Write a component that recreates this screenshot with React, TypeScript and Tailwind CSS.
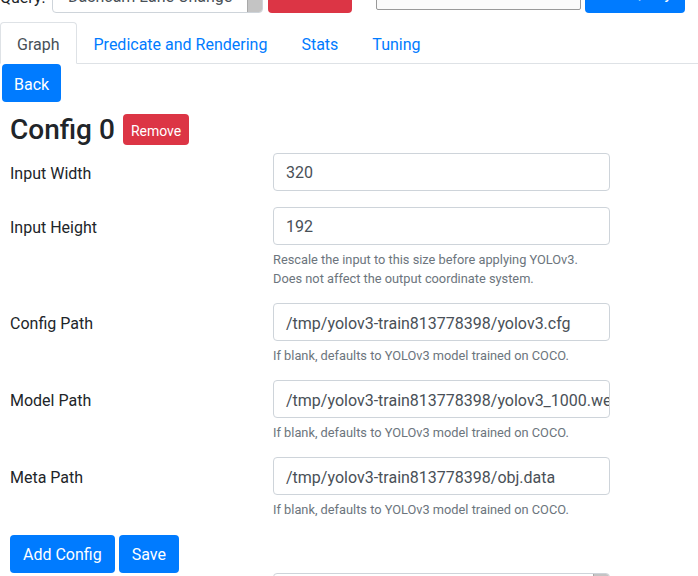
import React from 'react';

type Field = {
  label: string;
  value: string;
  help?: string[];
};

const fields: Field[] = [
  { label: 'Input Width', value: '320' },
  {
    label: 'Input Height',
    value: '192',
    help: [
      'Rescale the input to this size before applying YOLOv3.',
      'Does not affect the output coordinate system.',
    ],
  },
  {
    label: 'Config Path',
    value: '/tmp/yolov3-train813778398/yolov3.cfg',
    help: ['If blank, defaults to YOLOv3 model trained on COCO.'],
  },
  {
    label: 'Model Path',
    value: '/tmp/yolov3-train813778398/yolov3_1000.weights',
    help: ['If blank, defaults to YOLOv3 model trained on COCO.'],
  },
  {
    label: 'Meta Path',
    value: '/tmp/yolov3-train813778398/obj.data',
    help: ['If blank, defaults to YOLOv3 model trained on COCO.'],
  },
];

const tabs = ['Graph', 'Predicate and Rendering', 'Stats', 'Tuning'];

export default function App() {
  return (
    <div className="h-[576px] overflow-hidden bg-white font-['Roboto',sans-serif] text-[16px] leading-[24px] text-[#212529]">
      <div className="-mt-[25px]">
        {/* Query bar */}
        <div className="flex h-[38px] items-end">
          <span className="mb-[3px] w-[52px]">Query:</span>
          <div className="flex h-[38px] w-[211px] items-end overflow-hidden rounded-[4px] border border-[#ced4da] bg-white">
            <span className="mb-[3px] flex-1 pl-[15px] text-[#495057]">Dashcam Lane Change</span>
            <div className="h-full w-[15px] border-l border-[#a9a9a9] bg-[#c4c4c4]" />
          </div>
          <button className="ml-[5px] h-[38px] w-[84px] rounded-[4px] bg-[#dc3545] text-white">Remove</button>
          <input
            placeholder="Name"
            readOnly
            className="mb-[3px] ml-[24px] h-[32px] w-[205px] rounded-[2px] border border-[#999] bg-[#fafafa] px-[6px] text-[#495057] placeholder:text-[#757575]"
          />
          <button className="ml-[4px] h-[38px] w-[100px] rounded-[4px] bg-[#007bff] text-white">Add Query</button>
        </div>

        {/* Tabs */}
        <ul className="mt-[9px] flex border-b border-[#dee2e6]">
          {tabs.map((t, i) => (
            <li key={t} className="-mb-px">
              <a
                className={
                  i === 0
                    ? 'block rounded-t-[4px] border border-[#dee2e6] border-b-white bg-white px-4 pt-[10px] pb-[6px] text-[#495057]'
                    : 'block border border-transparent px-4 pt-[10px] pb-[6px] text-[#007bff]'
                }
              >
                {t}
              </a>
            </li>
          ))}
        </ul>

        <button className="ml-[2px] h-[38px] rounded-[4px] bg-[#007bff] px-3 pt-[3px] text-white">Back</button>

        <div className="pl-[10px]">
          <div className="mt-[11px] mb-[6px] flex items-center">
            <h3 className="text-[28px] font-medium leading-[33.6px]">Config 0</h3>
            <button className="ml-[8px] h-[31px] rounded-[4px] bg-[#dc3545] px-2 pt-[2px] text-[14px] text-white">Remove</button>
          </div>

          {fields.map((f) => (
            <div key={f.label} className="mb-4 flex">
              <div className="flex h-[38px] w-[263px] items-center pt-[4px]">{f.label}</div>
              <div className="w-[337px]">
                <div className="flex h-[38px] items-center overflow-hidden whitespace-nowrap rounded-[4px] border border-[#ced4da] px-3 pt-[3px] text-[#495057]">
                  {f.value}
                </div>
                {f.help && (
                  <div className="mt-1 pt-px -mb-px text-[12.8px] leading-[19.2px] text-[#6c757d]">
                    {f.help.map((h) => (
                      <div key={h}>{h}</div>
                    ))}
                  </div>
                )}
              </div>
            </div>
          ))}

          <div className="flex gap-1">
            <button className="h-[38px] rounded-[4px] bg-[#007bff] px-[13px] pt-[3px] text-white">Add Config</button>
            <button className="h-[38px] rounded-[4px] bg-[#007bff] px-[13px] pt-[3px] text-white">Save</button>
          </div>

          <div className="flex">
            <div className="w-[263px]" />
            <div className="flex h-[38px] w-[337px] overflow-hidden rounded-[4px] border border-[#ced4da]">
              <div className="flex-1" />
              <div className="h-full w-[16px] border-l border-[#a9a9a9] bg-[#c4c4c4]" />
            </div>
          </div>
        </div>
      </div>
    </div>
  );
}
